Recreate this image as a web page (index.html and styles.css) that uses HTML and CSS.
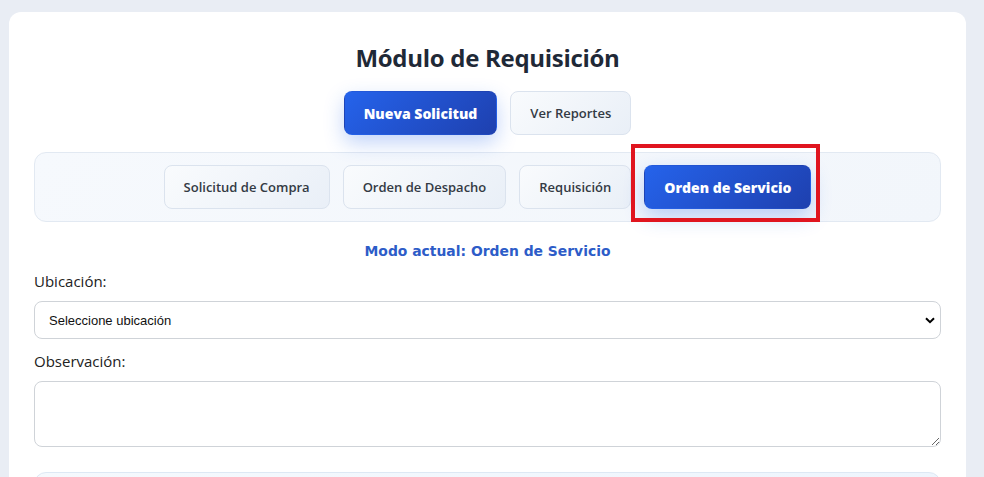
FILE: index.html
```html
<!DOCTYPE html>
<html>
<head>
    <title>Módulo de Requisición</title>
    <meta charset="UTF-8">
    <meta name="viewport" content="width=device-width">
    <link rel="stylesheet" href="styles.css">
</head>
<body>

<div class="card">
    <h2 class="title">Módulo de Requisición</h2>

    <div class="tabs">
        <button class="btn active">Nueva Solicitud</button>
        <button class="btn">Ver Reportes</button>
    </div>

    <div class="modes">
        <button class="btn">Solicitud de Compra</button>
        <button class="btn">Orden de Despacho</button>
        <button class="btn">Requisición</button>
        <button class="btn active marked">Orden de Servicio</button>
    </div>

    <div class="mode-label">Modo actual: Orden de Servicio</div>

    <label class="field-label" for="ubicacion">Ubicación:</label>
    <select id="ubicacion" class="field">
        <option>Seleccione ubicación</option>
    </select>

    <label class="field-label" for="observacion">Observación:</label>
    <textarea id="observacion" class="field area"></textarea>

    <div class="items"></div>
</div>

</body>
</html>
```

FILE: styles.css
```css
body{
    margin: 0;
    background-color: #e9edf4;
    font-family: "Open Sans", Arial, sans-serif;
    overflow: hidden;
}

.card{
    margin: 12px 18px 0 9px;
    padding: 29px 25px 40px 25px;
    background-color: #ffffff;
    border-radius: 12px;
    min-height: 600px;
}

.title{
    margin: 0;
    text-align: center;
    font-family: "Open Sans", sans-serif;
    font-size: 24px;
    font-weight: 700;
    line-height: 34px;
    color: #1f2937;
    letter-spacing: -0.3px;
}

.tabs{
    display: flex;
    justify-content: center;
    gap: 13px;
    margin-top: 16px;
}

.btn{
    height: 44px;
    padding: 0 19px;
    border: 1px solid #dbe3ee;
    border-radius: 8px;
    background: linear-gradient(135deg, #f9fbfd, #e9eff7);
    font-family: "Open Sans", sans-serif;
    font-size: 13px;
    font-weight: 600;
    color: #333a44;
    cursor: pointer;
}

.btn.active{
    border-color: transparent;
    background: linear-gradient(135deg, #2563eb, #1e40af);
    color: #ffffff;
    font-size: 14px;
    font-weight: 800;
    box-shadow: 0 8px 20px rgba(37, 99, 235, 0.28);
}

.modes{
    display: flex;
    justify-content: center;
    gap: 13px;
    margin-top: 17px;
    padding: 12px;
    border: 1px solid #e2e9f2;
    border-radius: 12px;
    background: linear-gradient(135deg, #f6f9fd, #f2f6fb);
}

.marked{
    position: relative;
}

.marked::after{
    content: "";
    position: absolute;
    top: -22px;
    left: -14px;
    right: -10px;
    bottom: -14px;
    border: 4px solid #e0151f;
}

.mode-label{
    margin-top: 21px;
    text-align: center;
    font-family: "DejaVu Sans", Verdana, sans-serif;
    font-size: 13.9px;
    font-weight: 700;
    color: #2d5cc8;
}

.field-label{
    display: block;
    margin-top: 11px;
    font-size: 15px;
    line-height: 22px;
    color: #222;
}

.field{
    display: block;
    box-sizing: border-box;
    width: 100%;
    margin-top: 9px;
    border: 1px solid #cfd3d8;
    border-radius: 8px;
    background-color: #fff;
    font-family: "Liberation Sans", Arial, sans-serif;
}

select.field{
    height: 38px;
    padding: 0 14px;
    font-size: 13px;
    color: #111;
    appearance: none;
    background-image: url("data:image/svg+xml,%3Csvg xmlns='http://www.w3.org/2000/svg' width='10' height='7' viewBox='0 0 10 7'%3E%3Cpath d='M1 1.2l4 4 4-4' fill='none' stroke='%23000' stroke-width='2'/%3E%3C/svg%3E");
    background-repeat: no-repeat;
    background-position: right 5px center;
}

.area{
    height: 66px;
    resize: vertical;
}

.field + .field-label{
    margin-top: 11px;
}

.items{
    margin-top: 25px;
    height: 60px;
    border: 1px solid #dde8f4;
    border-radius: 12px;
    background: linear-gradient(90deg, #f5f9fd, #eef5fd);
}
```
